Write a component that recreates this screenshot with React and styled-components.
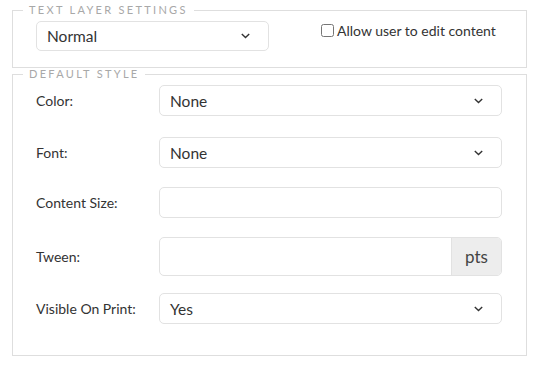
import styled, { createGlobalStyle } from "styled-components";

const GlobalStyle = createGlobalStyle`
  body {
    margin: 0;
    background: #fff;
    font-family: Lato, "Open Sans", sans-serif;
    color: #333;
  }
`;

const Page = styled.div`
  padding: 4px 12px 0 12px;
`;

const Group = styled.fieldset`
  margin: 0;
  border: 1px solid #dedede;
  padding: ${({ $bottom }) => `5px 24px ${$bottom}px 23px`};
  min-width: 0;
`;

const Legend = styled.legend`
  margin-left: -13px;
  padding: 0 6px;
  font-size: 11px;
  line-height: 12px;
  letter-spacing: 2.3px;
  color: #a8a8a8;
  text-transform: uppercase;
`;

const TopGrid = styled.div`
  display: grid;
  grid-template-columns: 233px 1fr;
  column-gap: 52px;
  align-items: start;
`;

const SelectBox = styled.div`
  height: ${({ $h }) => $h || 31}px;
  box-sizing: border-box;
  border: 1px solid #e2e2e2;
  border-radius: 5px;
  display: flex;
  align-items: center;
  justify-content: space-between;
  padding: 0 18px 0 10px;
  font-size: 15.5px;
  color: #333;
  background: #fff;
`;

const Chevron = () => (
  <svg width="9" height="6" viewBox="0 0 9 6" fill="none">
    <path d="M0.8 1 L4.5 4.6 L8.2 1" stroke="#333" strokeWidth="1.4" />
  </svg>
);

const CheckLabel = styled.label`
  display: flex;
  align-items: center;
  gap: 3px;
  margin-top: 1px;
  font-size: 14px;
  color: #333;

  input {
    margin: 0;
    width: 13px;
    height: 13px;
  }
`;

const Row = styled.div`
  display: grid;
  grid-template-columns: 123px 1fr;
  align-items: center;
  margin-bottom: ${({ $gap }) => $gap}px;
`;

const Label = styled.span`
  font-size: 14px;
  color: #333;
`;

const TextBox = styled.div`
  height: 31px;
  box-sizing: border-box;
  border: 1px solid #e2e2e2;
  border-radius: 5px;
  background: #fff;
`;

const InputGroup = styled.div`
  display: flex;
  height: 39px;
  box-sizing: border-box;
  border: 1px solid #e2e2e2;
  border-radius: 5px;
  overflow: hidden;
`;

const GroupField = styled.div`
  flex: 1;
`;

const Addon = styled.div`
  width: 49px;
  display: flex;
  align-items: center;
  justify-content: center;
  background: #ededed;
  border-left: 1px solid #e2e2e2;
  font-size: 17px;
  color: #444;
`;

const Select = ({ value, h }) => (
  <SelectBox $h={h}>
    <span>{value}</span>
    <Chevron />
  </SelectBox>
);

export default function App() {
  return (
    <>
      <GlobalStyle />
      <Page>
        <Group $bottom={16}>
          <Legend>Text Layer Settings</Legend>
          <TopGrid>
            <Select value="Normal" h={30} />
            <CheckLabel>
              <input type="checkbox" />
              Allow user to edit content
            </CheckLabel>
          </TopGrid>
        </Group>
        <Group $bottom={31}>
          <Legend>Default Style</Legend>
          <Row $gap={21}>
            <Label>Color:</Label>
            <Select value="None" />
          </Row>
          <Row $gap={19}>
            <Label>Font:</Label>
            <Select value="None" />
          </Row>
          <Row $gap={19}>
            <Label>Content Size:</Label>
            <TextBox />
          </Row>
          <Row $gap={17}>
            <Label>Tween:</Label>
            <InputGroup>
              <GroupField />
              <Addon>pts</Addon>
            </InputGroup>
          </Row>
          <Row $gap={0}>
            <Label>Visible On Print:</Label>
            <Select value="Yes" />
          </Row>
        </Group>
      </Page>
    </>
  );
}
